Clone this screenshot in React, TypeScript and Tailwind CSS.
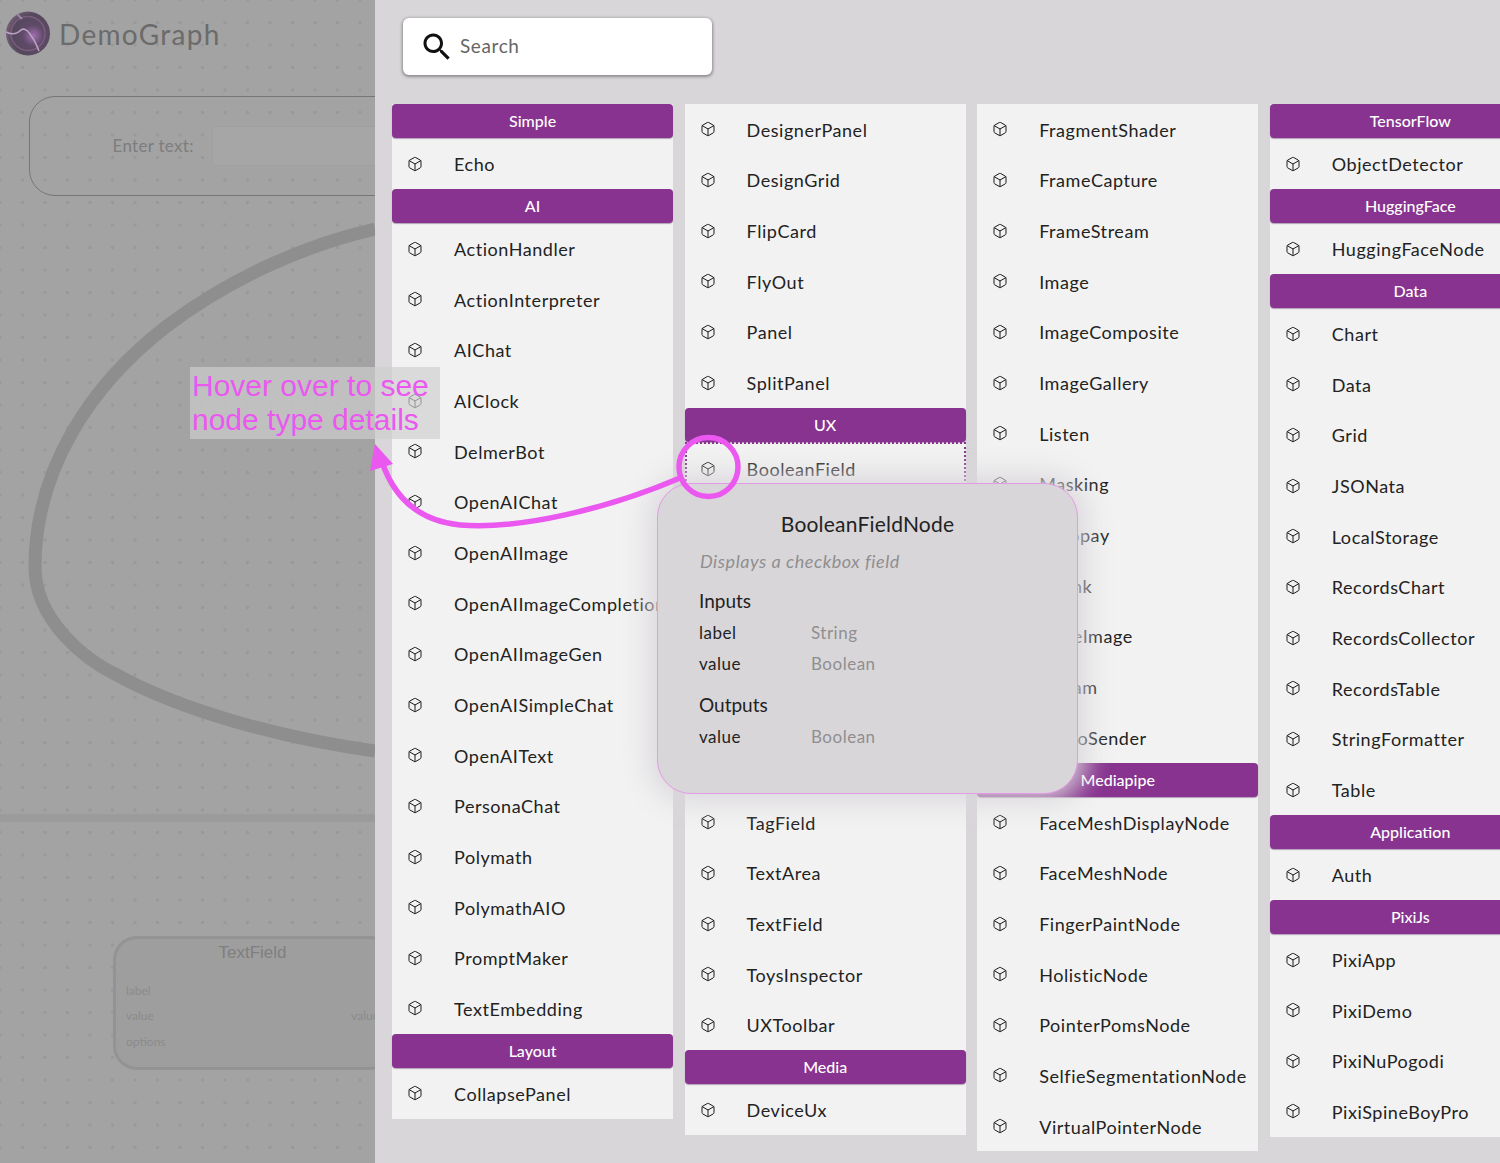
import React from "react";
import { Box } from "lucide-react";

type Section = { title?: string; items: (string | null)[] };

const columns: Section[][] = [
  [
    { title: "Simple", items: ["Echo"] },
    {
      title: "AI",
      items: [
        "ActionHandler", "ActionInterpreter", "AIChat", "AIClock", "DelmerBot", "OpenAIChat", "OpenAIImage",
        "OpenAIImageCompletion", "OpenAIImageGen", "OpenAISimpleChat", "OpenAIText", "PersonaChat", "Polymath",
        "PolymathAIO", "PromptMaker", "TextEmbedding",
      ],
    },
    { title: "Layout", items: ["CollapsePanel"] },
  ],
  [
    { items: ["DesignerPanel", "DesignGrid", "FlipCard", "FlyOut", "Panel", "SplitPanel"] },
    { title: "UX", items: ["BooleanField", null, null, null, null, null, null, "TagField", "TextArea", "TextField", "ToysInspector", "UXToolbar"] },
    { title: "Media", items: ["DeviceUx"] },
  ],
  [
    {
      items: [
        "FragmentShader", "FrameCapture", "FrameStream", "Image", "ImageComposite", "ImageGallery", "Listen",
        "Masking", "Autopay", "Shrink", "ScaleImage", "Stream", "VideoSender",
      ],
    },
    {
      title: "Mediapipe",
      items: ["FaceMeshDisplayNode", "FaceMeshNode", "FingerPaintNode", "HolisticNode", "PointerPomsNode", "SelfieSegmentationNode", "VirtualPointerNode"],
    },
  ],
  [
    { title: "TensorFlow", items: ["ObjectDetector"] },
    { title: "HuggingFace", items: ["HuggingFaceNode"] },
    {
      title: "Data",
      items: ["Chart", "Data", "Grid", "JSONata", "LocalStorage", "RecordsChart", "RecordsCollector", "RecordsTable", "StringFormatter", "Table"],
    },
    { title: "Application", items: ["Auth"] },
    { title: "PixiJs", items: ["PixiApp", "PixiDemo", "PixiNuPogodi", "PixiSpineBoyPro"] },
  ],
];

function Row({ name }: { name: string | null }) {
  const hovered = name === "BooleanField";
  return (
    <div
      className={
        "flex h-[50.67px] items-center overflow-hidden pr-[18px] " +
        (hovered ? "border-2 border-b-0 border-dotted border-[#87338f] pl-[13px]" : "pl-[15px]")
      }
    >
      {name && <Box size={16} strokeWidth={1.5} className="shrink-0 text-[#1a1a1a]" />}
      {name && <span className="ml-[31px] pt-[2px] text-[18px] tracking-[0.55px] whitespace-nowrap text-[#222]">{name}</span>}
    </div>
  );
}

function Column({ sections }: { sections: Section[] }) {
  return (
    <div className="flex w-[281.2px] shrink-0 flex-col self-start bg-[#f2f2f2]">
      {sections.map((s, i) => (
        <div key={i}>
          {s.title && (
            <div className="flex h-[34.33px] items-center justify-center rounded-[4px] bg-[#87338f] text-[16px] font-medium text-white shadow-[0_1px_1px_rgba(60,10,70,0.35)]">
              {s.title}
            </div>
          )}
          {s.items.map((n, j) => (
            <Row key={j} name={n} />
          ))}
        </div>
      ))}
    </div>
  );
}

function Canvas() {
  return (
    <div className="relative h-full w-[375px] shrink-0 overflow-hidden bg-[#a3a3a3] bg-[image:radial-gradient(circle,#999_1.5px,transparent_2px)] bg-[size:22.5px_22.5px] bg-[position:-11.25px_-11.25px]">
      <svg className="absolute top-0 left-0" width="375" height="1163" fill="none">
        <defs>
          <radialGradient id="logo" cx="62%" cy="55%" r="60%">
            <stop offset="0%" stopColor="#a06fae" />
            <stop offset="40%" stopColor="#5f4a68" />
            <stop offset="80%" stopColor="#54485c" />
            <stop offset="100%" stopColor="#6f5c72" />
          </radialGradient>
        </defs>
        <circle cx="28" cy="33.5" r="22" fill="url(#logo)" />
        <circle cx="28" cy="33.5" r="17" stroke="#7c5c7e" strokeWidth="1.5" />
        <path d="M6 32 C12 35 17 34 21 30 C25 27 29 32 32 37 C35 41 37 46 39 51" stroke="#b9a2c6" strokeWidth="1.6" />
        <path d="M17 14 L22 19" stroke="#9d8ba3" strokeWidth="1.8" />
        <path
          d="M375 229 C300 246 225 282 167 326 C90 385 35 470 35 567 C35 620 85 660 117 675 C180 710 280 738 375 751"
          stroke="#8e8e8e"
          strokeWidth="13"
        />
      </svg>
      <span className="absolute top-[13px] left-[59px] text-[28px] tracking-[1.3px] text-[#6b6b6b]">DemoGraph</span>
      <div className="absolute top-[96px] left-[28.5px] flex h-[100px] w-[400px] items-center rounded-[26px] border border-[#777] pl-[83px]">
        <span className="shrink-0 text-[17px] tracking-[0.3px] whitespace-nowrap text-[#7d7d7d]">Enter text:</span>
        <div className="ml-[18px] h-[40px] w-[220px] shrink-0 rounded-[4px] border border-[#a0a0a0] bg-[#a6a6a6]" />
      </div>
      <div className="absolute top-[814px] left-0 h-[8px] w-full bg-[#9b9b9b]" />
      <div className="absolute top-[936px] left-[113px] flex h-[134px] w-[280px] flex-col rounded-[24px] border-[3px] border-[#939393] bg-[#9e9e9e] pt-[4px] pr-[11px] pl-[10px]">
        <div className="text-center font-['Liberation_Sans',sans-serif] text-[17px] leading-[20px] text-[#7f7f7f]">TextField</div>
        <div className="mt-[20px] text-[12px] leading-[16px] text-[#8b8b8b]">label</div>
        <div className="mt-[9px] flex justify-between text-[12px] leading-[16px] text-[#8b8b8b]">
          <span>value</span>
          <span>value</span>
        </div>
        <div className="mt-[10px] text-[12px] leading-[16px] text-[#8b8b8b]">options</div>
      </div>
    </div>
  );
}

function Tooltip() {
  return (
    <div className="absolute top-[483px] left-[657px] flex h-[311px] w-[421px] flex-col rounded-[34px] border border-[#e39be6] bg-[#d9d6da] px-[41px] pt-[27px] tracking-[0.5px] text-[#222] shadow-[0_0_24px_10px_rgba(217,214,218,0.85)]">
      <div className="text-center text-[21px] leading-[26px] tracking-[0.2px]">BooleanFieldNode</div>
      <div className="mt-[12px] pl-[1px] text-[18px] leading-[24px] tracking-[0.55px] text-[#8f8f8f] italic">Displays a checkbox field</div>
      <div className="mt-[15px] text-[19px] leading-[26px] tracking-[0px]">Inputs</div>
      <div className="mt-[7px] flex text-[17px] leading-[24px]">
        <span className="w-[112px]">label</span>
        <span className="text-[#8f8f8f]">String</span>
      </div>
      <div className="mt-[7px] flex text-[17px] leading-[24px]">
        <span className="w-[112px]">value</span>
        <span className="text-[#8f8f8f]">Boolean</span>
      </div>
      <div className="mt-[16px] text-[19px] leading-[26px] tracking-[0px]">Outputs</div>
      <div className="mt-[7px] flex text-[17px] leading-[24px]">
        <span className="w-[112px]">value</span>
        <span className="text-[#8f8f8f]">Boolean</span>
      </div>
    </div>
  );
}

function Annotation() {
  return (
    <>
      <div className="absolute top-[367px] left-[190px] h-[72px] w-[250px] bg-[rgba(206,206,206,0.68)] pt-[2px] pl-[2px] font-['Liberation_Sans',sans-serif] text-[30px] leading-[34px] text-[#ea58f0]">
        Hover over to see
        <br />
        node type details
      </div>
      <svg className="pointer-events-none absolute top-0 left-0" width="1500" height="1163" fill="none">
        <circle cx="708.5" cy="467" r="29.5" stroke="#ea58f0" strokeWidth="5.5" />
        <path d="M680 478 C610 508 520 530 460 525 C420 521 395 500 382 462" stroke="#ea58f0" strokeWidth="5.5" />
        <path d="M375 444 L393 464 L370 471 Z" fill="#ea58f0" />
      </svg>
    </>
  );
}

export default function App() {
  return (
    <div className="relative flex h-[1163px] w-[1500px] overflow-hidden bg-[#d9d6da] font-['Lato','Noto_Sans',sans-serif]">
      <Canvas />
      <div className="min-w-0 flex-1">
        <div className="mt-[18px] ml-[28px] flex h-[57px] w-[309px] items-center rounded-[6px] bg-white shadow-[0_1px_3px_1px_rgba(0,0,0,0.35)]">
          <svg className="ml-[16px]" width="36" height="36" viewBox="0 0 24 24" fill="#111">
            <path d="M15.5 14h-.79l-.28-.27C15.41 12.59 16 11.11 16 9.5 16 5.91 13.09 3 9.5 3S3 5.91 3 9.5 5.91 16 9.5 16c1.61 0 3.09-.59 4.23-1.57l.27.28v.79l5 4.99L20.49 19l-4.99-5zm-6 0C7.01 14 5 11.99 5 9.5S7.01 5 9.5 5 14 7.01 14 9.5 11.99 14 9.5 14z" />
          </svg>
          <span className="ml-[5px] text-[19px] tracking-[0.6px] text-[#666]">Search</span>
        </div>
        <div className="mt-[29px] flex gap-[11.4px] pl-[17px]">
          {columns.map((c, i) => (
            <Column key={i} sections={c} />
          ))}
        </div>
      </div>
      <Tooltip />
      <Annotation />
    </div>
  );
}
